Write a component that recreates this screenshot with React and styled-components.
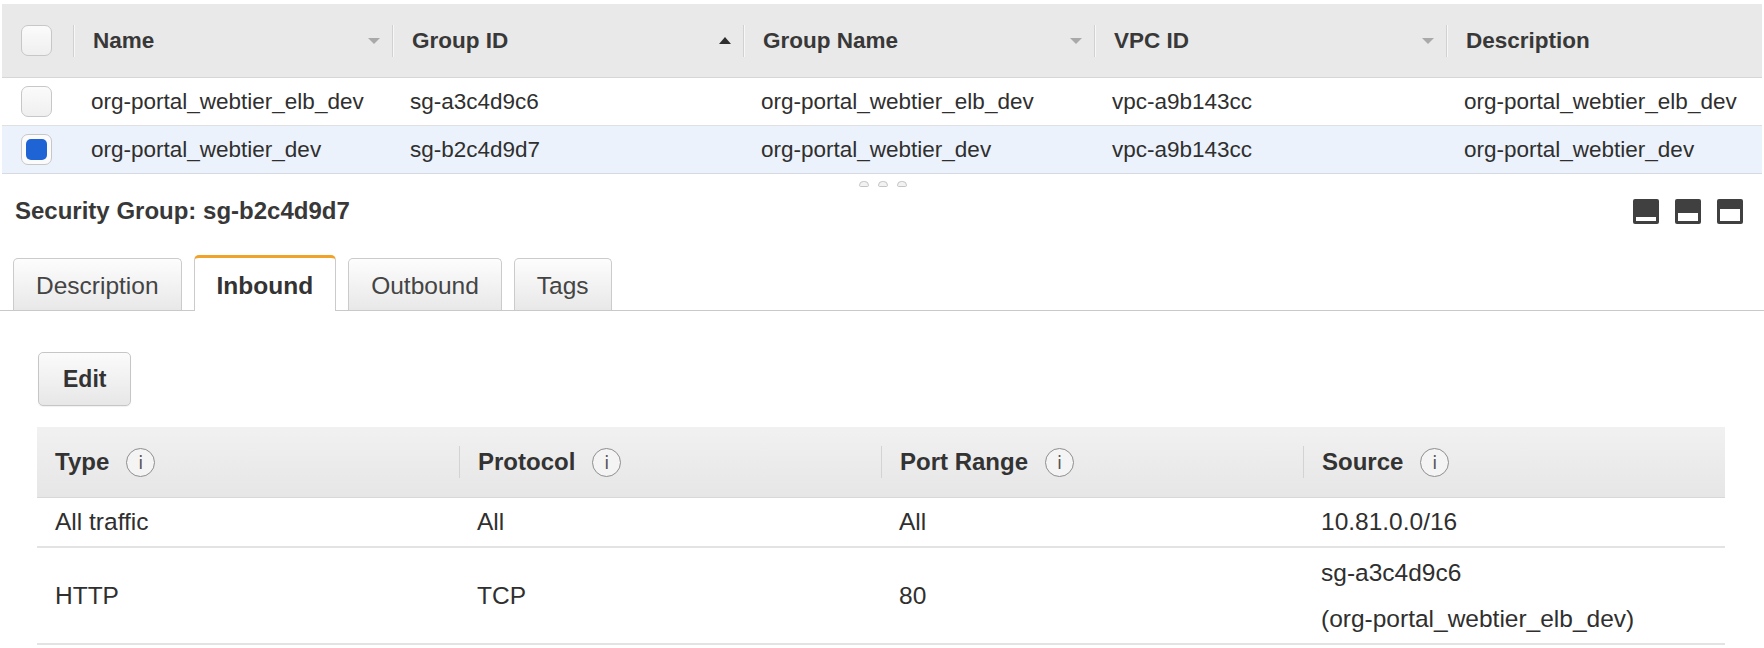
import React from "react";
import styled, { createGlobalStyle } from "styled-components";

const Global = createGlobalStyle`
  html, body { margin: 0; padding: 0; background: #fff; }
  body {
    font-family: "Liberation Sans", Arial, Helvetica, sans-serif;
    color: #333;
    width: 1764px;
    height: 648px;
    overflow: hidden;
  }
  * { box-sizing: border-box; }
`;

const GRID = "71px 319px 351px 351px 352px 1fr";

const Page = styled.div`
  display: flex;
  flex-direction: column;
  padding-top: 4px;
`;

const GroupTable = styled.div`
  margin: 0 2px;
`;

const GroupHeader = styled.div`
  display: grid;
  grid-template-columns: ${GRID};
  align-items: center;
  height: 74px;
  background: #e9e9e9;
  border-bottom: 1px solid #d6d6d6;
`;

const HeadCell = styled.div`
  display: flex;
  align-items: center;
  justify-content: space-between;
  height: 32px;
  border-left: 1px solid #d1d1d1;
  box-shadow: inset 1px 0 0 #f7f7f7;
  padding: 0 12px 0 19px;
  font-weight: bold;
  font-size: 22.5px;
  color: #383838;
  white-space: nowrap;
`;

const SortArrow = styled.span`
  width: 0;
  height: 0;
  border-left: 6px solid transparent;
  border-right: 6px solid transparent;
  ${(p) =>
    p.$up
      ? "border-bottom: 7px solid #2e2e2e;"
      : "border-top: 6px solid #a9a9a9;"}
`;

const GroupRow = styled.div`
  display: grid;
  grid-template-columns: ${GRID};
  align-items: center;
  height: 48px;
  border-bottom: 1px solid ${(p) => (p.$selected ? "#d6dbe3" : "#e0e0e0")};
  background: ${(p) => (p.$selected ? "#ecf2fb" : "#fff")};
  font-size: 22.5px;
  color: #2f2f2f;
`;

const Cell = styled.div`
  padding-left: 18px;
  white-space: nowrap;
`;

const Check = styled.span`
  display: block;
  width: 31px;
  height: 31px;
  margin-left: 19px;
  padding: 4px;
  border: 1px solid #c7c7c7;
  border-radius: 7px;
  background: ${(p) => (p.$checked ? "#fbfbfb" : "linear-gradient(#fbfbfb, #efefef)")};
  &::after {
    content: "";
    display: ${(p) => (p.$checked ? "block" : "none")};
    width: 100%;
    height: 100%;
    border-radius: 5px;
    background: #1e64d5;
  }
`;

const Handle = styled.div`
  display: flex;
  justify-content: center;
  align-items: center;
  gap: 9px;
  height: 20px;
  padding-left: 2px;
`;

const HandleDot = styled.span`
  width: 10px;
  height: 6px;
  border: 1px solid #c4c4c4;
  border-radius: 5px 5px 2px 2px;
  background: #f2f2f2;
`;

const TitleBar = styled.div`
  display: flex;
  align-items: center;
  justify-content: space-between;
  height: 32px;
  padding: 2px 21px 0 15px;
`;

const Title = styled.div`
  font-weight: bold;
  font-size: 24px;
  color: #383838;
`;

const PanelIcons = styled.div`
  display: flex;
  gap: 16px;
`;

const PanelIcon = ({ fill }) => (
  <svg width="26" height="25" viewBox="0 0 26 25">
    <rect x="0" y="0" width="26" height="25" rx="2" fill="#404040" />
    <rect x="3" y={22 - fill} width="20" height={fill} fill="#fff" />
  </svg>
);

const TabBar = styled.div`
  display: flex;
  align-items: flex-end;
  gap: 12px;
  height: 56px;
  margin-top: 29px;
  padding-left: 13px;
  border-bottom: 1px solid #c9c9c9;
`;

const Tab = styled.div`
  display: flex;
  align-items: center;
  justify-content: center;
  padding: 3px 22px 0;
  font-size: 24.5px;
  border: 1px solid #cbcbcb;
  border-bottom: none;
  border-radius: 5px 5px 0 0;
  ${(p) =>
    p.$active
      ? `
    height: 56px;
    margin-bottom: -1px;
    background: #fff;
    border-top: 3px solid #f0a328;
    font-weight: bold;
    color: #333;
  `
      : `
    height: 52px;
    background: linear-gradient(#fdfdfd, #e8e8e8);
    color: #444;
  `}
`;

const Content = styled.div`
  display: flex;
  flex-direction: column;
  align-items: flex-start;
  padding: 0 39px 0 37px;
`;

const EditButton = styled.button`
  margin-top: 41px;
  margin-left: 1px;
  height: 54px;
  padding: 0 24px;
  border: 1px solid #c6c6c6;
  border-radius: 5px;
  background: linear-gradient(#fbfbfb, #e7e7e7);
  font-family: inherit;
  font-weight: bold;
  font-size: 23px;
  color: #333;
  box-shadow: 0 1px 1px rgba(0, 0, 0, 0.06);
`;

const RuleTable = styled.div`
  align-self: stretch;
  margin-top: 21px;
`;

const RuleHeader = styled.div`
  display: grid;
  grid-template-columns: repeat(4, 1fr);
  align-items: center;
  height: 71px;
  background: linear-gradient(#f1f1f1, #e6e6e6);
  border-bottom: 1px solid #d8d8d8;
`;

const RuleHeadCell = styled.div`
  display: flex;
  align-items: center;
  height: 32px;
  padding-left: 18px;
  border-left: ${(p) => (p.$first ? "none" : "1px solid #d3d3d3")};
  font-weight: bold;
  font-size: 24px;
  color: #333;
  white-space: nowrap;
`;

const InfoIcon = styled.span`
  display: inline-flex;
  align-items: center;
  justify-content: center;
  width: 29px;
  height: 29px;
  margin-left: 17px;
  border: 1.5px solid #8e8e8e;
  border-radius: 50%;
  font-family: "DejaVu Sans", sans-serif;
  font-weight: normal;
  font-size: 18px;
  color: #555;
  background: #f4f4f4;
`;

const RuleRow = styled.div`
  display: grid;
  grid-template-columns: repeat(4, 1fr);
  align-items: center;
  height: ${(p) => p.$h}px;
  border-bottom: 2px solid #e3e3e3;
  font-size: 24.5px;
  color: #2f2f2f;
`;

const RuleCell = styled.div`
  padding-left: 18px;
  line-height: 46px;
  white-space: nowrap;
`;

const groups = [
  { name: "org-portal_webtier_elb_dev", id: "sg-a3c4d9c6", vpc: "vpc-a9b143cc", selected: false },
  { name: "org-portal_webtier_dev", id: "sg-b2c4d9d7", vpc: "vpc-a9b143cc", selected: true },
];

export default function App() {
  return (
    <>
      <Global />
      <Page>
        <GroupTable>
          <GroupHeader>
            <Check />
            <HeadCell>
              Name <SortArrow />
            </HeadCell>
            <HeadCell>
              Group ID <SortArrow $up />
            </HeadCell>
            <HeadCell>
              Group Name <SortArrow />
            </HeadCell>
            <HeadCell>
              VPC ID <SortArrow />
            </HeadCell>
            <HeadCell>Description</HeadCell>
          </GroupHeader>
          {groups.map((g) => (
            <GroupRow key={g.id} $selected={g.selected}>
              <Check $checked={g.selected} />
              <Cell>{g.name}</Cell>
              <Cell>{g.id}</Cell>
              <Cell>{g.name}</Cell>
              <Cell>{g.vpc}</Cell>
              <Cell>{g.name}</Cell>
            </GroupRow>
          ))}
        </GroupTable>

        <Handle>
          <HandleDot />
          <HandleDot />
          <HandleDot />
        </Handle>

        <TitleBar>
          <Title>Security Group: sg-b2c4d9d7</Title>
          <PanelIcons>
            <PanelIcon fill={4} />
            <PanelIcon fill={8} />
            <PanelIcon fill={12} />
          </PanelIcons>
        </TitleBar>

        <TabBar>
          <Tab>Description</Tab>
          <Tab $active>Inbound</Tab>
          <Tab>Outbound</Tab>
          <Tab>Tags</Tab>
        </TabBar>

        <Content>
          <EditButton>Edit</EditButton>
          <RuleTable>
            <RuleHeader>
              <RuleHeadCell $first>
                Type <InfoIcon>i</InfoIcon>
              </RuleHeadCell>
              <RuleHeadCell>
                Protocol <InfoIcon>i</InfoIcon>
              </RuleHeadCell>
              <RuleHeadCell>
                Port Range <InfoIcon>i</InfoIcon>
              </RuleHeadCell>
              <RuleHeadCell>
                Source <InfoIcon>i</InfoIcon>
              </RuleHeadCell>
            </RuleHeader>
            <RuleRow $h={50}>
              <RuleCell>All traffic</RuleCell>
              <RuleCell>All</RuleCell>
              <RuleCell>All</RuleCell>
              <RuleCell>10.81.0.0/16</RuleCell>
            </RuleRow>
            <RuleRow $h={97}>
              <RuleCell>HTTP</RuleCell>
              <RuleCell>TCP</RuleCell>
              <RuleCell>80</RuleCell>
              <RuleCell>
                sg-a3c4d9c6
                <br />
                (org-portal_webtier_elb_dev)
              </RuleCell>
            </RuleRow>
          </RuleTable>
        </Content>
      </Page>
    </>
  );
}
